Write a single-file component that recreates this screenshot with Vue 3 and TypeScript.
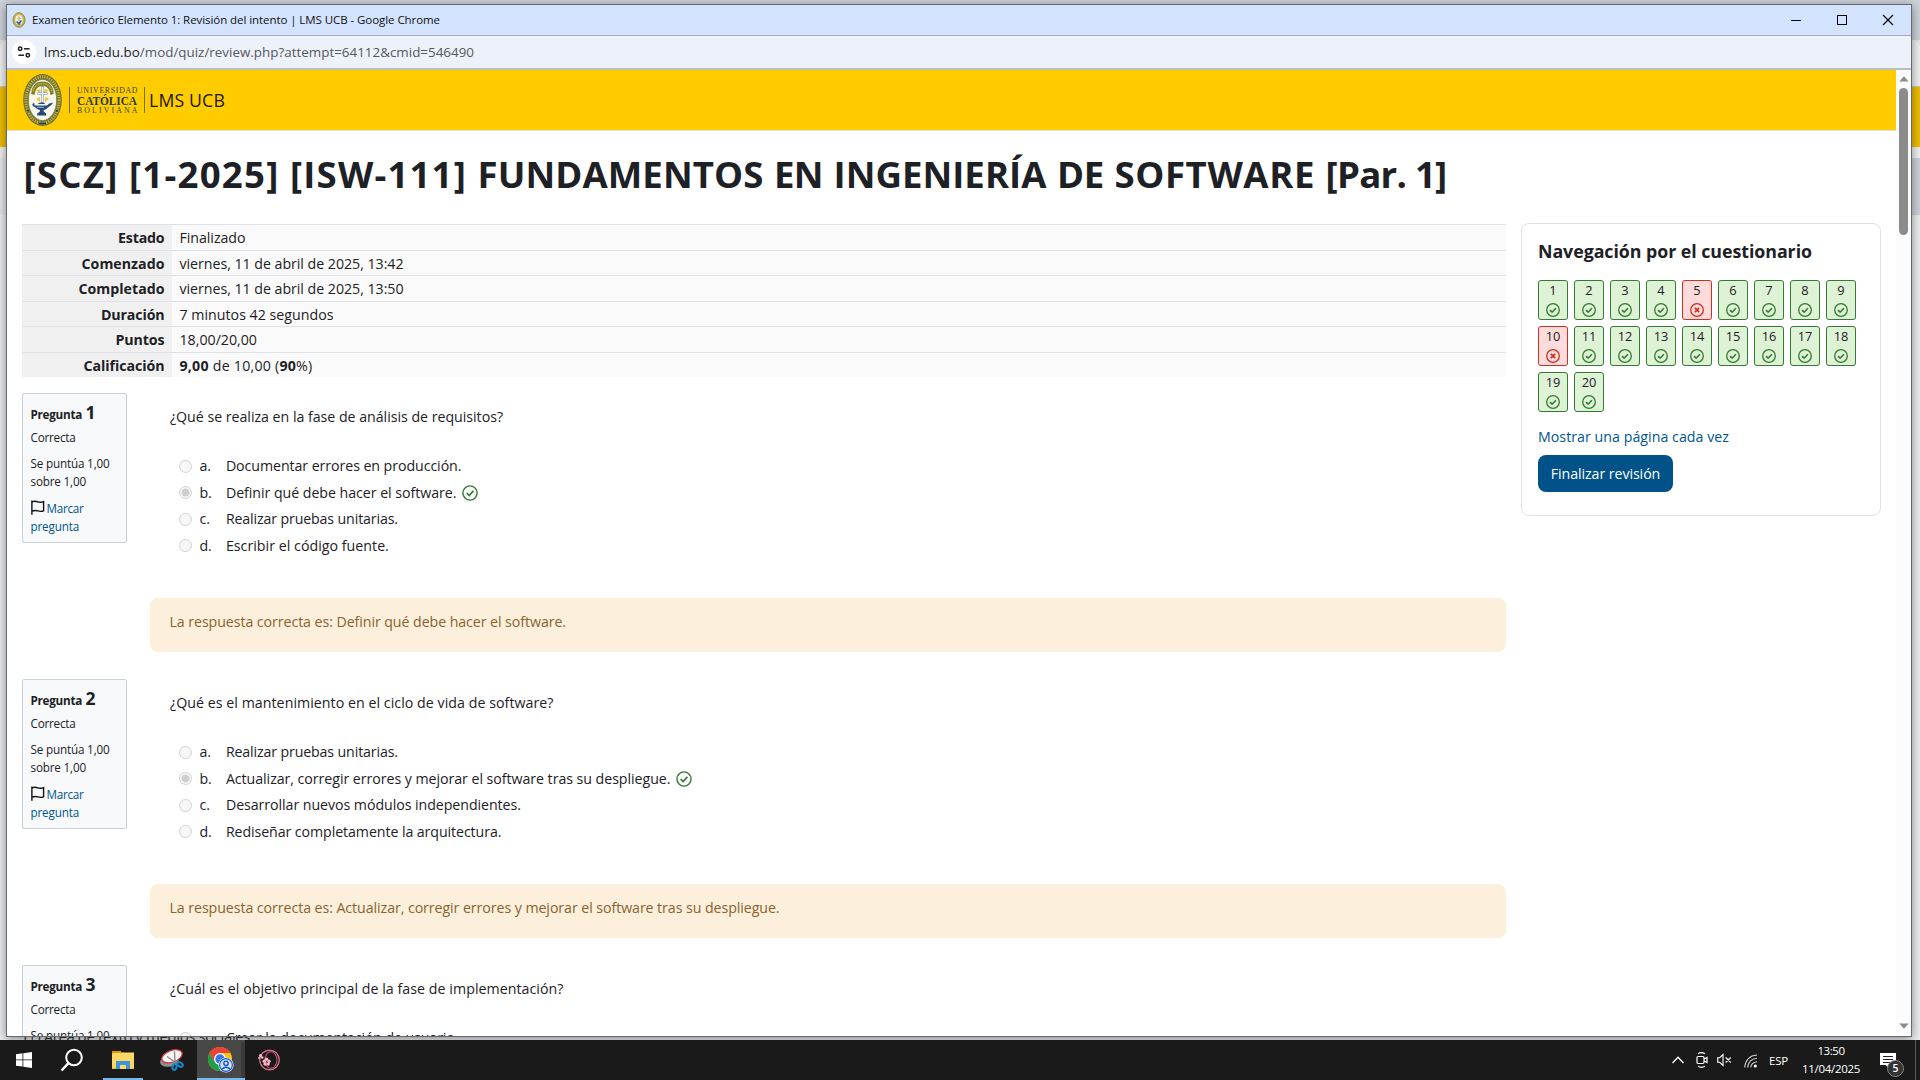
<script setup lang="ts">
import type { Directive } from 'vue'

interface Option { letter: string; text: string; width: number; selected?: boolean }
interface Question {
  number: number
  text: string
  width: number
  options: Option[]
  feedback?: string
  feedbackWidth?: number
}

// Spreads the letters of a label evenly so that it fills the given width in pixels.
const vFit: Directive<HTMLElement, number> = {
  mounted(el, binding) {
    const count = (el.textContent ?? '').length
    const natural = el.getBoundingClientRect().width
    if (count > 1) el.style.letterSpacing = `${(binding.value - natural) / count}px`
  },
}

const heading = [
  { text: '[SCZ]', width: 95 },
  { text: '[1-2025]', width: 150.5 },
  { text: '[ISW-111]', width: 177 },
  { text: 'FUNDAMENTOS', width: 286 },
  { text: 'EN', width: 49 },
  { text: 'INGENIERÍA', width: 213 },
  { text: 'DE', width: 47 },
  { text: 'SOFTWARE', width: 200.5 },
  { text: '[Par. 1]', width: 121 },
]

const summary = [
  { label: 'Estado', labelWidth: 46.5, value: 'Finalizado', width: 66 },
  { label: 'Comenzado', labelWidth: 83, value: 'viernes, 11 de abril de 2025, 13:42', width: 224 },
  { label: 'Completado', labelWidth: 86, value: 'viernes, 11 de abril de 2025, 13:50', width: 224 },
  { label: 'Duración', labelWidth: 63.5, value: '7 minutos 42 segundos', width: 154 },
  { label: 'Puntos', labelWidth: 49, value: '18,00/20,00', width: 77.5 },
]

const questions: Question[] = [
  {
    number: 1,
    text: '¿Qué se realiza en la fase de análisis de requisitos?',
    width: 333,
    options: [
      { letter: 'a.', text: 'Documentar errores en producción.', width: 235.5 },
      { letter: 'b.', text: 'Definir qué debe hacer el software.', width: 230.5, selected: true },
      { letter: 'c.', text: 'Realizar pruebas unitarias.', width: 172 },
      { letter: 'd.', text: 'Escribir el código fuente.', width: 163 },
    ],
    feedback: 'La respuesta correcta es: Definir qué debe hacer el software.',
    feedbackWidth: 396.5,
  },
  {
    number: 2,
    text: '¿Qué es el mantenimiento en el ciclo de vida de software?',
    width: 383.5,
    options: [
      { letter: 'a.', text: 'Realizar pruebas unitarias.', width: 172 },
      { letter: 'b.', text: 'Actualizar, corregir errores y mejorar el software tras su despliegue.', width: 444.5, selected: true },
      { letter: 'c.', text: 'Desarrollar nuevos módulos independientes.', width: 295 },
      { letter: 'd.', text: 'Rediseñar completamente la arquitectura.', width: 275.5 },
    ],
    feedback: 'La respuesta correcta es: Actualizar, corregir errores y mejorar el software tras su despliegue.',
    feedbackWidth: 610,
  },
  {
    number: 3,
    text: '¿Cuál es el objetivo principal de la fase de implementación?',
    width: 393.5,
    options: [{ letter: 'a.', text: 'Crear la documentación de usuario.', width: 232.5 }],
  },
]

const wrong = [5, 10]
const navItems = Array.from({ length: 20 }, (_, i) => ({ n: i + 1, ok: !wrong.includes(i + 1) }))
</script>

<template>
  <div class="desktop">
    <div class="back">
      <div class="back-tabs"></div>
      <div class="back-bar"></div>
      <div class="back-header"></div>
      <div class="back-gap"></div>
      <div class="back-band"></div>
      <div class="back-page"><span v-fit="226">(+) Área de texto y medios sociales</span></div>
    </div>

    <div class="window">
      <div class="titlebar">
        <svg class="favicon" width="14" height="16" viewBox="0 0 14 16">
          <ellipse cx="7" cy="8" rx="6" ry="7.3" fill="#c9b24a" stroke="#8f8a4a" stroke-width="1" />
          <ellipse cx="7" cy="8" rx="3.8" ry="5.2" fill="#eef1f2" />
          <path d="M7 3.5v6M5 6.5h4" stroke="#d8b64b" stroke-width="1.2" />
          <path d="M4.5 9.5q2.5 3 5-1M5.5 12h3" stroke="#45648c" stroke-width="1.5" fill="none" />
        </svg>
        <span class="title"><span v-fit="408" class="t">Examen teórico Elemento 1: Revisión del intento | LMS UCB - Google Chrome</span></span>
        <svg class="controls" width="110" height="12" viewBox="0 0 110 12" shape-rendering="crispEdges" stroke="#000" fill="none">
          <path d="M0 6.5h10" />
          <rect x="46.5" y="1.5" width="9" height="9" />
          <path d="M92 1l10 10M102 1l-10 10" shape-rendering="auto" stroke-width="1.1" />
        </svg>
      </div>
      <div class="urlbar">
        <span class="site">
          <svg width="14" height="14" viewBox="0 0 14 14" fill="none" stroke="#1f1f1f" stroke-width="1.5">
            <circle cx="3.2" cy="3.8" r="1.7" /><path d="M7 3.8h5.6" />
            <circle cx="10.8" cy="10.2" r="1.7" /><path d="M1.4 10.2H7" />
          </svg>
        </span>
        <span v-fit="430" class="t url"><b>lms.ucb.edu.bo</b>/mod/quiz/review.php?attempt=64112&amp;cmid=546490</span>
      </div>

      <div class="viewport">
        <div class="page">
          <header class="brandbar">
            <svg width="124" height="56" viewBox="0 0 124 56">
              <ellipse cx="19.5" cy="28" rx="19.3" ry="26" fill="#6b7440" />
              <ellipse cx="19.5" cy="28" rx="16.6" ry="23.3" fill="none" stroke="#cdae27" stroke-width="3" stroke-dasharray="1.3 1.1" />
              <ellipse cx="19.5" cy="28" rx="14.2" ry="20.600" fill="#f7f6e9" stroke="#7d8348" stroke-width=".9" />
              <path d="M8.2 22Q9 9.500 19.500 9.500T30.800 22L27.500 23Q26.500 14 19.500 14T11.500 23Z" fill="#7d8030" />
              <path d="M10 19Q12.500 11.700 19.500 11.700T29 19" fill="none" stroke="#dcb81c" stroke-width="1.5" stroke-dasharray="1.2 1" />
              <path d="M13 18l4.500 4v-5zM26 18l-4.500 4v-5zM13 27l4-2v5zM26 27l-4-2v5z" fill="#ecc638" />
              <path d="M19.500 14v17M14.500 21.500h10" stroke="#8ba3ae" stroke-width="2.600" />
              <path d="M19.500 15v15M15 21.500h9" stroke="#fff" stroke-width="1.200" />
              <path d="M11.500 33.500h12.500q2-3 6-2.800-1.500 3-4.800 4.600-2 2.400-4.700 2.700l.4 1.800 2.300 1.700v2h-9v-2l2.500-1.700.3-1.900q-3.500-.5-4.700-2.600-2.800-.5-3-2.800.5-1.600 2.200-1z" fill="#234a7b" />
              <path d="M14.500 32q4-2.800 8 0z" fill="#234a7b" /><path d="M14 35.200h7" stroke="#a7bfd4" />
              <path d="M4.500 38l1.300 1.500M34.500 38l-1.300 1.500M16 51.500h7" stroke="#21384c" stroke-width="1.500" />
              <path d="M46.500 15v26M121.500 15v26" stroke="#756c25" stroke-width="1" />
              <g font-family="'Liberation Serif', serif" fill="#394525">
                <text x="54" y="20.500" font-size="7.800" textLength="60.500">UNIVERSIDAD</text>
                <text x="54" y="32.500" font-size="11.500" font-weight="700" textLength="60" lengthAdjust="spacingAndGlyphs" fill="#263c3b">CATÓLICA</text>
                <text x="54" y="41" font-size="7.800" textLength="60.500">BOLIVIANA</text>
              </g>
            </svg>
            <span v-fit="76" class="t brand">LMS UCB</span>
          </header>

          <h1><span v-for="word in heading" :key="word.text" v-fit="word.width" class="t">{{ word.text }}</span></h1>

          <div class="columns">
            <main>
              <div class="summary">
                <div v-for="row in summary" :key="row.label" class="row">
                  <div class="label"><span v-fit="row.labelWidth" class="t">{{ row.label }}</span></div>
                  <div class="value"><span v-fit="row.width" class="t">{{ row.value }}</span></div>
                </div>
                <div class="row">
                  <div class="label"><span v-fit="81" class="t">Calificación</span></div>
                  <div class="value"><span v-fit="133" class="t"><b>9,00</b> de 10,00 (<b>90</b>%)</span></div>
                </div>
              </div>

              <section v-for="q in questions" :key="q.number" class="question">
                <div class="info">
                  <div class="no"><span v-fit="51.500" class="t">Pregunta</span><span class="num">{{ q.number }}</span></div>
                  <div class="line"><span v-fit="45" class="t">Correcta</span></div>
                  <div class="line gap"><span v-fit="79" class="t">Se puntúa 1,00</span></div>
                  <template v-if="q.feedback">
                    <div class="line"><span v-fit="55.500" class="t">sobre 1,00</span></div>
                    <div class="line gap flag">
                      <svg width="14" height="15" viewBox="0 0 14 15" fill="none" stroke="#111" stroke-width="1.400">
                        <path d="M.9.500v14.200" /><path d="M1 1.800Q4 .8 6.800 1.800T12.600 1.600V10.800Q9.800 11.800 7 10.900T1 11" />
                      </svg>
                      <span v-fit="37" class="t">Marcar</span>
                    </div>
                    <div class="line link"><span v-fit="48.500" class="t">pregunta</span></div>
                  </template>
                </div>
                <div class="content">
                  <div class="qtext"><span v-fit="q.width" class="t">{{ q.text }}</span></div>
                  <div class="options">
                    <div v-for="o in q.options" :key="o.letter" class="option">
                      <span class="radio" :class="{ on: o.selected }"></span>
                      <span v-if="q.feedback" class="letter">{{ o.letter }}</span>
                      <span v-else class="letter"></span>
                      <span v-fit="o.width" class="t">{{ o.text }}</span>
                      <svg v-if="o.selected" class="tick" width="16" height="16" viewBox="0 0 16 16" fill="none" stroke="#357a32">
                        <circle cx="8" cy="8" r="7.100" stroke-width="1.400" />
                        <path d="M4.700 8.200l2.400 2.300 4.300-4.600" stroke-width="1.700" />
                      </svg>
                    </div>
                  </div>
                  <div v-if="q.feedback" class="feedback"><span v-fit="q.feedbackWidth ?? 0" class="t">{{ q.feedback }}</span></div>
                </div>
              </section>
            </main>

            <aside>
              <h2><span v-fit="274" class="t">Navegación por el cuestionario</span></h2>
              <div class="grid">
                <div v-for="item in navItems" :key="item.n" class="cell" :class="{ bad: !item.ok }">
                  <span class="n">{{ item.n }}</span>
                  <svg width="14" height="14" viewBox="0 0 14 14" fill="none" stroke="currentColor">
                    <circle cx="7" cy="7" r="6.300" stroke-width="1.300" />
                    <path v-if="item.ok" d="M4 7.200l2.100 2 3.800-4" stroke-width="1.600" />
                    <path v-else d="M4.900 4.900l4.200 4.200M9.100 4.900L4.900 9.100" stroke-width="1.700" />
                  </svg>
                </div>
              </div>
              <div class="each"><span v-fit="191" class="t">Mostrar una página cada vez</span></div>
              <div class="finish"><span v-fit="109.500" class="t">Finalizar revisión</span></div>
            </aside>
          </div>
        </div>
        <div class="scrollbar">
          <svg width="10" height="6" viewBox="0 0 10 6"><path d="M5 .3L9.600 5.600H.4z" fill="#8b8b8b" /></svg>
          <div class="thumb"></div>
          <svg class="down" width="10" height="6" viewBox="0 0 10 6"><path d="M5 5.700L9.600.4H.4z" fill="#8b8b8b" /></svg>
        </div>
      </div>
    </div>

    <footer class="taskbar">
      <div class="app start">
        <svg width="16" height="16" viewBox="0 0 16 16" fill="#fff"><path d="M0 2.200l6.500-.9v6.200H0zM7.300 1.200L16 0v7.500H7.300zM0 8.300h6.500v6.300L0 13.700zM7.300 8.300H16V16l-8.700-1.300z" /></svg>
      </div>
      <div class="app">
        <svg width="24" height="24" viewBox="0 0 24 24" fill="none" stroke="#fff" stroke-width="2"><circle cx="14" cy="9.500" r="7.800" /><path d="M8.500 15.200L1.500 22.500" stroke-width="2.500" /></svg>
      </div>
      <div class="app open">
        <svg width="22" height="20" viewBox="0 0 22 20">
          <path d="M0 1h8l1.500 1.500H22V19H0z" fill="#ffd766" /><path d="M0 1h8.500L10 3H1L0 4z" fill="#e29a00" />
          <path d="M4 19v-8h14v8h-4v-4H8v4z" fill="#3b95da" /><path d="M0 17.500h4V19H0zM18 17.500h4V19h-4z" fill="#f4c23f" />
        </svg>
      </div>
      <div class="app snip">
        <svg width="26" height="24" viewBox="0 0 26 24">
          <ellipse cx="10.500" cy="13" rx="9.500" ry="5.500" transform="rotate(-12 10.500 13)" fill="#8f8f8f" />
          <ellipse cx="13" cy="8.300" rx="10.700" ry="5.800" transform="rotate(-20 13 8.300)" fill="#f5f5f5" stroke="#cf3434" stroke-width="1.300" />
          <path d="M8 8.500l10 7M15.500 3.500L16 16" stroke="#8b8b8b" stroke-width="1.400" />
          <g fill="none" stroke="#1689cd" stroke-width="2"><ellipse cx="15.500" cy="19" rx="2" ry="3" transform="rotate(15 15.500 19)" /><ellipse cx="21" cy="16.500" rx="3" ry="2" transform="rotate(30 21 16.500)" /></g>
        </svg>
      </div>
      <div class="app open active">
        <svg width="26" height="26" viewBox="0 0 26 26">
          <circle cx="12" cy="12" r="12" fill="#fbc116" />
          <path d="M1.600 6A12 12 0 0 0 12 24L17.200 15 12 12 6.800 15z" fill="#229c48" />
          <path d="M1.600 6A12 12 0 0 1 22.400 6H12L6.800 15z" fill="#ea4335" />
          <circle cx="12" cy="12" r="6" fill="#fff" /><circle cx="12" cy="12" r="4.700" fill="#3879e8" />
          <circle cx="18" cy="18" r="7.600" fill="#fff" /><circle cx="18" cy="18" r="6.400" fill="#d5e3fc" stroke="#1a5fd0" stroke-width="1.200" />
          <circle cx="18" cy="16.300" r="2.200" fill="none" stroke="#1553bd" stroke-width="1.400" /><path d="M14 22q4-3.600 8 0" fill="none" stroke="#1553bd" stroke-width="1.500" />
        </svg>
      </div>
      <div class="app">
        <svg width="24" height="22" viewBox="0 0 24 22" fill="none">
          <circle cx="12.500" cy="11" r="9.800" stroke="#c96a83" stroke-width="1.400" /><ellipse cx="14" cy="11" rx="6" ry="8.300" stroke="#b3506e" stroke-width="1.200" />
          <g fill="#f7b5c2"><circle cx="9.500" cy="10.300" r="1.800" /><circle cx="7.200" cy="12.300" r="1.700" /><circle cx="12" cy="12.300" r="1.700" /><circle cx="8.100" cy="15" r="1.700" /><circle cx="11.200" cy="15" r="1.700" /><circle cx="3.500" cy="6.500" r="1.600" /><circle cx="5.200" cy="8.500" r="1.300" /><circle cx="2" cy="9" r="1" /></g>
          <circle cx="9.700" cy="13.200" r=".9" fill="#c03c60" />
        </svg>
      </div>

      <div class="tray">
        <svg width="12" height="8" viewBox="0 0 12 8" fill="none" stroke="#fff" stroke-width="1.300"><path d="M.5 7L6 1.300 11.500 7" /></svg>
        <svg class="cam" width="12" height="16" viewBox="0 0 12 16" fill="none" stroke="#fff" stroke-width="1.200"><rect x="1" y="4.500" width="7" height="7" rx="1.200" /><path d="M8 7l3-1.500v5L8 9M2 1.700Q5.500-.3 9 1.700M2 14.300q3.500 2 7 0" /></svg>
        <svg class="vol" width="15" height="14" viewBox="0 0 15 14" fill="none" stroke="#fff" stroke-width="1.100"><path d="M.7 4.700h2L6 1.500v11L2.700 9.300h-2zM8.700 4.500l5 5M13.700 4.500l-5 5" /></svg>
        <svg class="wifi" width="14" height="14" viewBox="0 0 14 14" fill="none" stroke="#d2d2d2" stroke-width="1.100"><path d="M.7 13.500C1.500 6 6 1.500 13 1M3.700 13.500C4.200 8.500 7.500 4.800 13 4.300M6.700 13.500C7 10.500 9 8.200 13 7.700" /><circle cx="11.300" cy="12" r="1.600" fill="#fff" stroke="none" /></svg>
        <span v-fit="18.500" class="t lang">ESP</span>
        <div class="clock">
          <span v-fit="27" class="t">13:50</span>
          <span v-fit="58" class="t">11/04/2025</span>
        </div>
        <div class="notif">
          <svg width="32" height="26" viewBox="0 0 32 26">
            <path d="M1 1h16v12h-6v4l-4.500-4H1z" fill="#fff" /><path d="M4 4.500h10M4 7.500h10M4 10.500h10" stroke="#222" stroke-width="1" />
            <circle cx="16.500" cy="16.500" r="8" fill="#343434" stroke="#858585" />
            <text x="16.500" y="20.300" text-anchor="middle" fill="#fff" font-size="10.500" font-weight="600" font-family="'Open Sans', sans-serif">5</text>
          </svg>
        </div>
        <div class="peek"></div>
      </div>
    </footer>
  </div>
</template>

<style>
html, body { margin: 0; overflow: hidden; }
</style>

<style scoped>
* { box-sizing: border-box; }
svg { display: block; flex: none; }
.t { display: inline-block; white-space: nowrap; }
.desktop {
  position: relative; width: 1920px; height: 1080px; overflow: hidden;
  font-family: 'Open Sans', 'Noto Sans', sans-serif; font-size: 14.2px; color: #1d2125; background: #e3e4e6;
}
.back { position: absolute; inset: 0; display: flex; flex-direction: column; }
.back-tabs { height: 40px; background: #ced3da; }
.back-bar { height: 47px; background: #f0f0f1; border-bottom: 1px solid #c8cacc; border-radius: 8px 8px 0 0; }
.back-header { height: 60px; background: #efbf00; }
.back-gap { height: 11px; background: #f1f1f2; }
.back-band { height: 57px; background: linear-gradient(90deg, #e6e7e9 0 50%, #ced2d9 50% 100%); }
.back-page { flex: 1; background: #eceeef; padding: 809px 0 0 24px; line-height: 24px; font-size: 15px; color: #333; }
.back-page span { display: inline-block; white-space: nowrap; }

.window {
  position: absolute; left: 6px; top: 4px; width: 1906px; height: 1033px; border: 1px solid #666a70;
  display: flex; flex-direction: column; background: #fff; box-shadow: 0 2px 10px rgba(0, 0, 0, .45);
}
.titlebar { height: 31px; background: #d3e3fd; border-bottom: 1px solid #a9adb4; display: flex; align-items: center; color: #111; padding: 0 10px 0 5px; }
.title { margin-left: 6px; font-size: 11.5px; flex: 1; line-height: 28px; }
.urlbar { height: 34px; flex: none; background: #edf1fa; border-bottom: 2px solid #b9bcc1; display: flex; align-items: center; padding-left: 5px; }
.site { width: 24px; height: 24px; border-radius: 50%; background: #fff; display: flex; align-items: center; justify-content: center; }
.url { margin-left: 8px; font-size: 13.4px; color: #55585c; line-height: 30px; }
.url b { font-weight: 400; color: #1f1f1f; }

.viewport { flex: 1; min-height: 0; display: flex; overflow: hidden; }
.page { width: 1889px; }
.brandbar { height: 61px; background: #ffcc00; border-bottom: 1px solid #dee2e6; display: flex; padding: 1.500px 0 0 15.500px; }
.brand { margin-left: 2.500px; font-size: 17.7px; line-height: 57px; color: #1c1800; }
h1 { display: flex; gap: 10.500px; margin: 21px 0 0 16.500px; height: 44px; line-height: 44px; font-size: 36.6px; font-weight: 700; }
.columns { display: flex; gap: 15px; margin: 27px 0 0 15px; align-items: flex-start; }
main { width: 1484px; padding-top: 1px; }
.row { display: flex; height: 25.5px; border-top: 1px solid #dee2e6; line-height: 25px; background: #fafafa; }
.label { width: 150px; background: #f0f0f0; text-align: right; padding-right: 7.500px; font-weight: 700; }
.value { padding-left: 7.500px; }
.question { display: flex; height: 286px; }
.summary { margin-bottom: 16px; }
.info { width: 105px; height: 149.500px; border: 1px solid #cad0d7; border-radius: 2px; background: #f7f9fb; padding: 6px 0 0 7.500px; font-size: 11.7px; }
.no { display: flex; align-items: baseline; height: 28px; line-height: 24px; font-weight: 700; }
.num { font-size: 17.500px; margin-left: 3.500px; }
.line { height: 18px; line-height: 18px; }
.gap { margin-top: 8.400px; }
.link, .flag { color: #00568f; }
.flag { display: flex; gap: 2px; align-items: center; }
.content { margin-left: 23px; flex: 1; }
.qtext { padding: 13px 0 0 20px; height: 60px; line-height: 22.500px; }
.options { padding-left: 28.500px; height: 145px; }
.option { display: flex; align-items: center; height: 26.500px; line-height: 26.500px; }
.radio { width: 13px; height: 13px; border-radius: 50%; border: 1px solid #d2d2d2; background: #f7f7f7; }
.radio.on { background: radial-gradient(circle, #cfcfcf 0 3.700px, #f7f7f7 4.300px); }
.letter { width: 26.500px; margin-left: 7.900px; }
.tick { margin-left: 6px; }
.feedback { height: 53.500px; border-radius: 8px; background: #fcefdc; color: #8a632d; padding: 13px 0 0 19.500px; line-height: 22.500px; }

aside { width: 360px; height: 292.500px; border: 1px solid #dee2e6; border-radius: 8px; padding: 14px 16px; }
h2 { margin: 0; font-size: 17.800px; line-height: 26px; height: 42px; }
.grid { display: flex; flex-wrap: wrap; gap: 6px; }
.cell { width: 30px; height: 40px; border: 1px solid #357a32; border-radius: 3px; background: #def2d6; color: #357a32; display: flex; flex-direction: column; align-items: center; }
.cell.bad { border-color: #ca3120; color: #ca3120; background: #ffdbdb; }
.n { font-size: 12.800px; color: #1d2125; height: 22px; line-height: 19px; }
.each { color: #00568f; margin-top: 13px; line-height: 24px; height: 30px; }
.finish { width: 135px; height: 37px; border-radius: 8px; background: #005288; color: #fff; text-align: center; line-height: 37px; }

.scrollbar { width: 15px; background: #fcfcfc; display: flex; flex-direction: column; align-items: center; padding-top: 6px; }
.thumb { width: 9px; height: 147px; margin-top: 6px; border-radius: 5px; background: #8b8b8b; }
.down { margin-top: auto; margin-bottom: 7px; }

.taskbar { position: absolute; left: 0; top: 1040px; width: 1920px; height: 40px; background: #1a1a1a; display: flex; color: #fff; font-size: 11.500px; }
.app { width: 48px; height: 40px; display: flex; align-items: center; justify-content: center; border-bottom: 2px solid transparent; border-top: 2px solid transparent; }
.open { width: 40px; border-bottom-color: #76b9ed; margin: 0 6px 0 7px; }
.snip { padding-right: 2px; }
.open.active { width: 48px; margin: 0; background: #484848; box-shadow: inset -4px 0 #3a3a3a; border-top-color: #484848; }
.tray { margin-left: auto; display: flex; align-items: center; height: 40px; }
.cam { margin-left: 12px; }
.vol { margin-left: 9.500px; }
.wifi { margin: 2px 11px 0 12px; }
.lang { width: 19px; }
.clock { width: 60px; margin-left: 13px; display: flex; flex-direction: column; align-items: center; line-height: 18px; }
.notif { margin: 9px 0 0 17.500px; }
.peek { width: 1px; height: 40px; background: #5b5b5b; margin: 0 4px 0 4.500px; }
</style>
